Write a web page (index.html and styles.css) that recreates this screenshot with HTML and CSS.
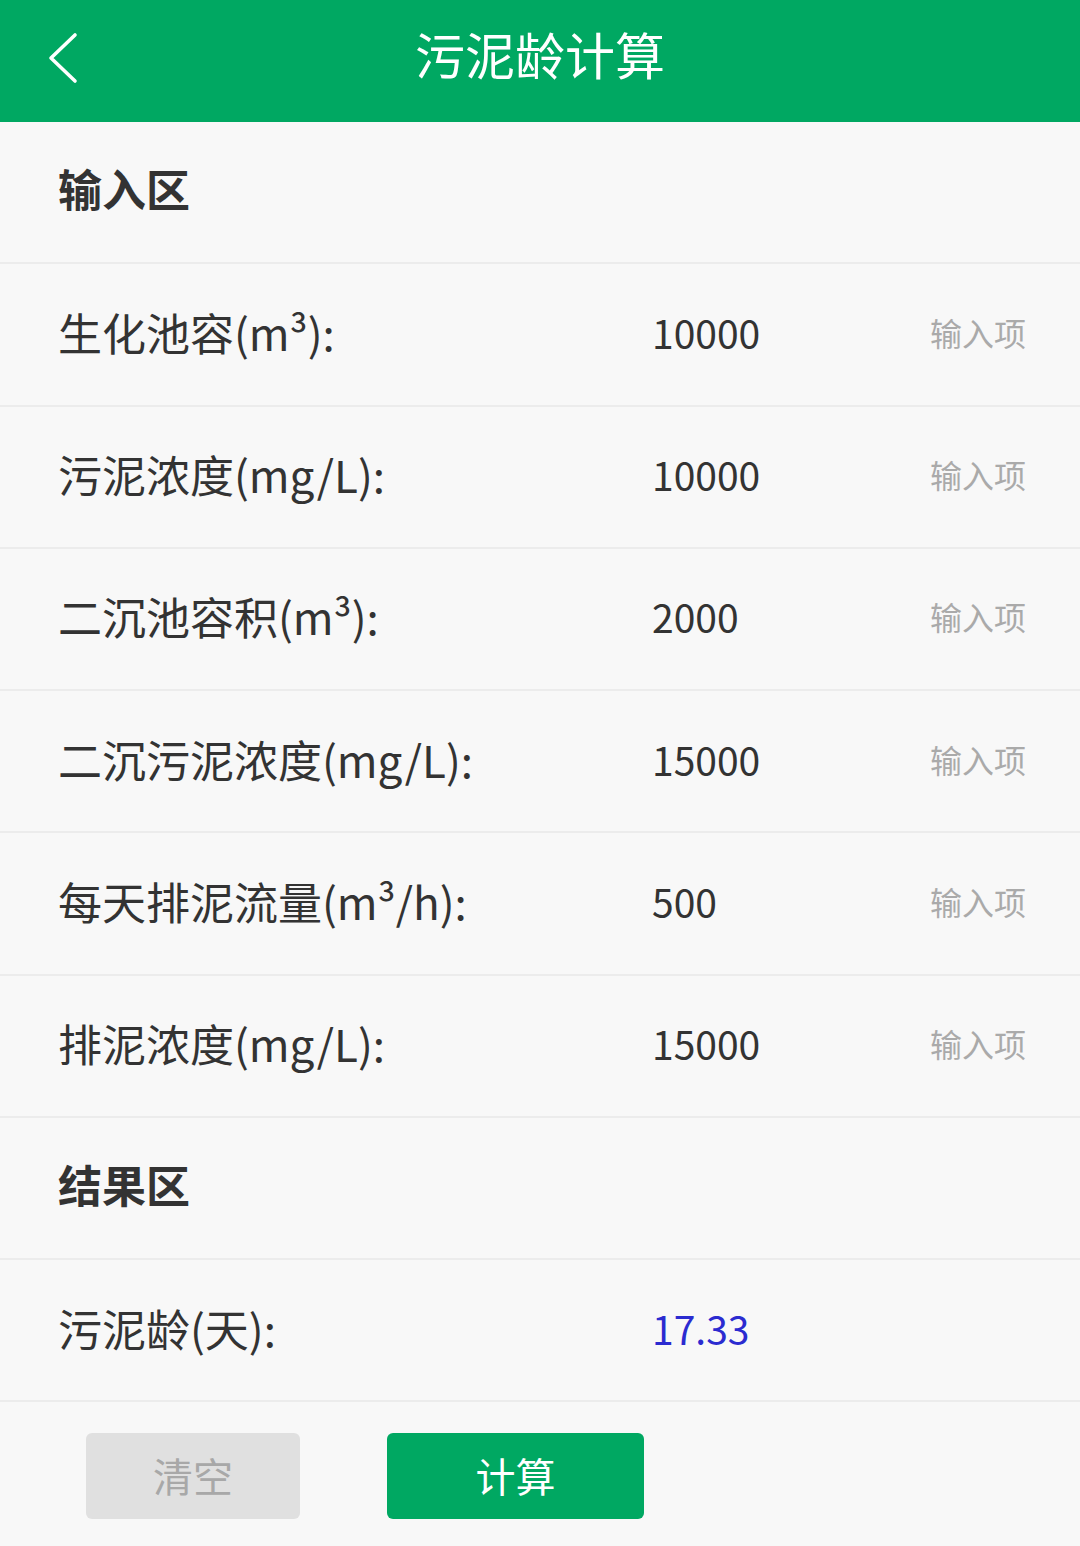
FILE: index.html
```html
<!DOCTYPE html>
<html lang="zh-CN">
<head>
<meta charset="utf-8">
<title>污泥龄计算</title>
<link rel="stylesheet" href="styles.css">
</head>
<body>
<header class="topbar">
  <span class="back">
    <svg width="34" height="52" viewBox="0 0 34 52"><polyline points="30,3 6,26 30,49" fill="none" stroke="#fff" stroke-width="3.6" stroke-linecap="round" stroke-linejoin="round"/></svg>
  </span>
  <h1 class="title">污泥龄计算</h1>
</header>
<main>
  <div class="section">输入区</div>
  <div class="row"><span class="label">生化池容(m³):</span><span class="value">10000</span><span class="hint">输入项</span></div>
  <div class="row"><span class="label">污泥浓度(mg/L):</span><span class="value">10000</span><span class="hint">输入项</span></div>
  <div class="row"><span class="label">二沉池容积(m³):</span><span class="value">2000</span><span class="hint">输入项</span></div>
  <div class="row"><span class="label">二沉污泥浓度(mg/L):</span><span class="value">15000</span><span class="hint">输入项</span></div>
  <div class="row"><span class="label">每天排泥流量(m³/h):</span><span class="value">500</span><span class="hint">输入项</span></div>
  <div class="row"><span class="label">排泥浓度(mg/L):</span><span class="value">15000</span><span class="hint">输入项</span></div>
  <div class="section">结果区</div>
  <div class="row"><span class="label">污泥龄(天):</span><span class="value result">17.33</span><span class="hint"></span></div>
  <div class="actions">
    <button class="btn btn-clear">清空</button>
    <button class="btn btn-calc">计算</button>
  </div>
</main>
</body>
</html>
```
FILE: styles.css
```css
* { box-sizing: border-box; }
html, body { margin: 0; padding: 0; }
body {
  width: 1080px;
  height: 1546px;
  background: #f8f8f8;
  font-family: "Noto Sans CJK SC", "Noto Sans", sans-serif;
  color: #333;
  overflow: hidden;
}
.topbar {
  height: 122px;
  background: #00a862;
  display: flex;
  align-items: center;
  justify-content: center;
  position: relative;
  padding-bottom: 16px;
}
.back {
  position: absolute;
  left: 45px;
  top: 32px;
  display: flex;
}
.title {
  margin: 0;
  color: #fff;
  font-weight: 400;
  font-size: 50px;
  letter-spacing: 0;
}
.section {
  height: 142.25px;
  display: flex;
  align-items: center;
  padding-left: 58px;
  padding-bottom: 8px;
  font-size: 44px;
  font-weight: 700;
  color: #333;
  border-bottom: 2px solid #ececec;
}
.row {
  height: 142.25px;
  display: grid;
  grid-template-columns: 594px 278px 1fr;
  align-items: center;
  padding-left: 58px;
  padding-bottom: 5px;
  border-bottom: 2px solid #ececec;
}
.label {
  font-size: 44px;
  color: #333;
}
.value {
  font-size: 39px;
  color: #333;
}
.value.result { color: #2b2bd0; }
.hint {
  font-size: 32px;
  color: #aaa;
}
.actions {
  display: flex;
  padding: 31px 0 0 86px;
  gap: 87px;
}
.btn {
  height: 86px;
  border: none;
  border-radius: 6px;
  font-family: "Noto Sans CJK SC", "Noto Sans", sans-serif;
  font-size: 40px;
  padding-bottom: 4px;
}
.btn-clear {
  width: 214px;
  background: #e0e0e0;
  color: #a8a8a8;
}
.btn-calc {
  width: 257px;
  background: #00a862;
  color: #fff;
}
```
